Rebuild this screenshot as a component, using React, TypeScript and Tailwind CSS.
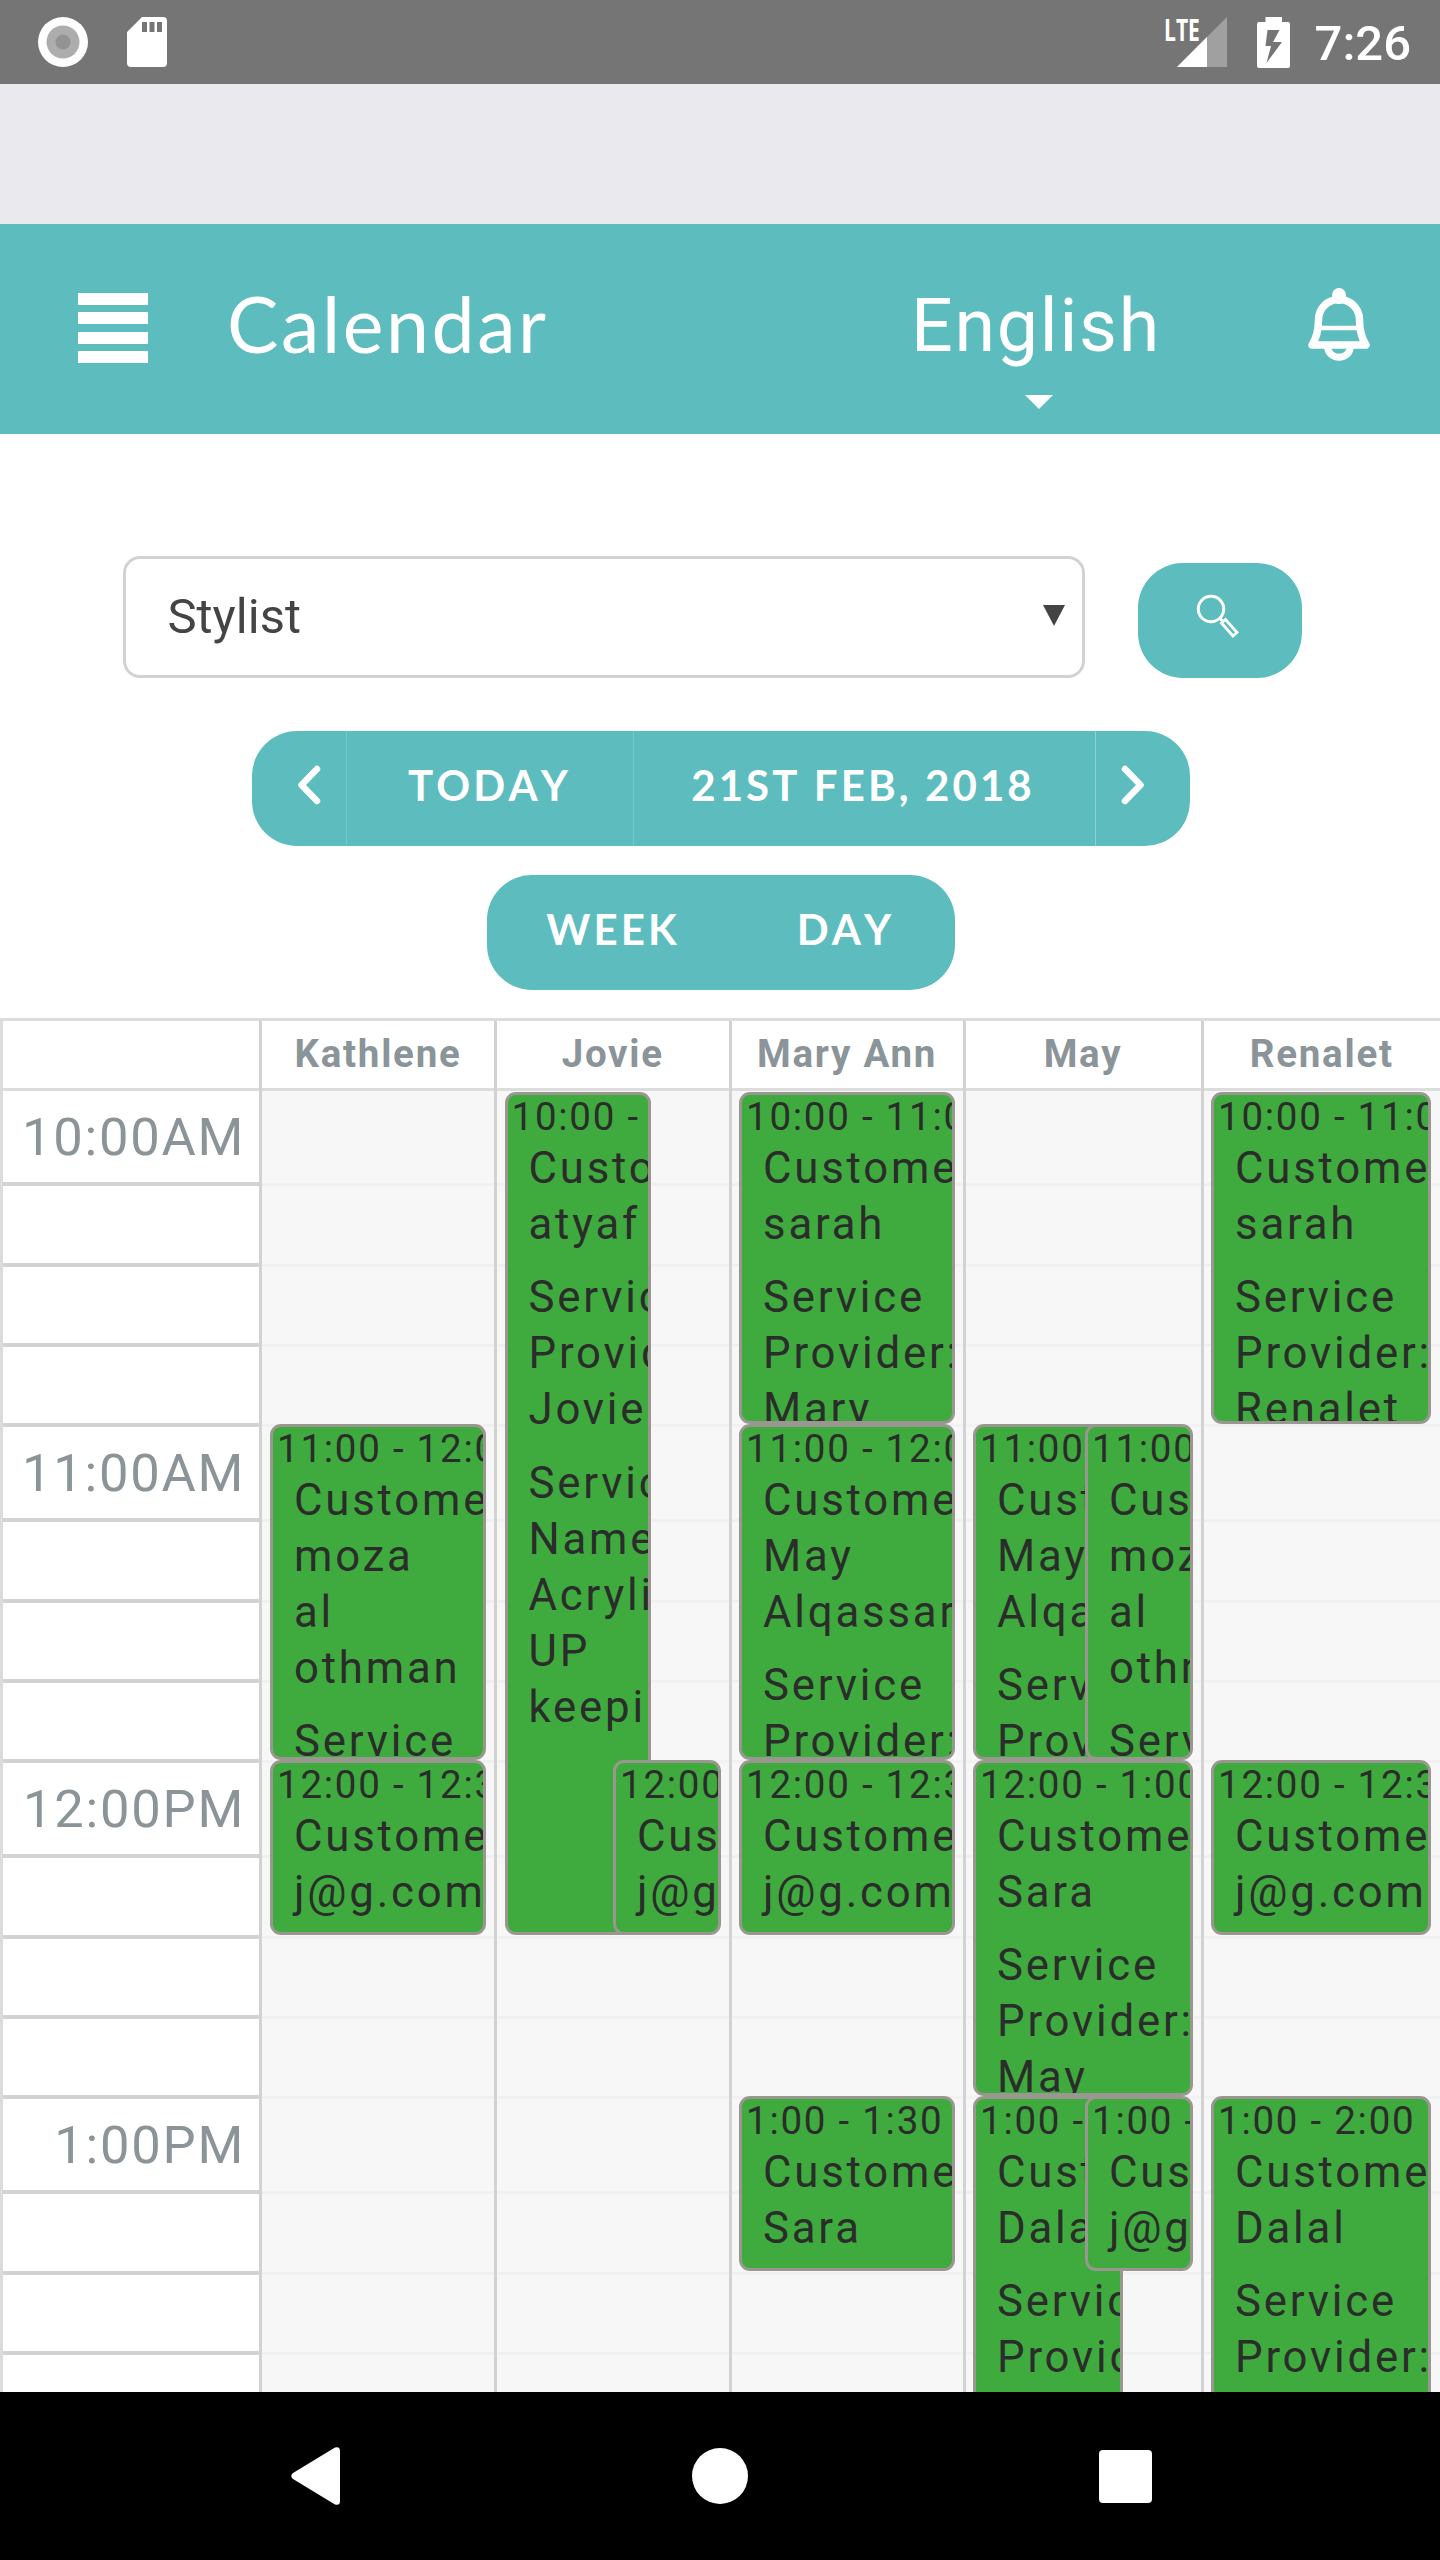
interface Booking {
  time: string;
  top: number;
  left: number;
  width: number;
  height: number;
  paragraphs: string[][];
}

interface Stylist {
  name: string;
  column: string;
  bookings: Booking[];
}

const HOURS = ["10:00AM", "11:00AM", "12:00PM", "1:00PM"];

const stylists: Stylist[] = [
  {
    name: "Kathlene",
    column: "w-[235px]",
    bookings: [
      {
        time: "11:00 - 12:00",
        top: 333,
        left: 8,
        width: 216,
        height: 336,
        paragraphs: [["Customer:", "moza", "al", "othman"], ["Service"]],
      },
      {
        time: "12:00 - 12:30",
        top: 669,
        left: 8,
        width: 216,
        height: 175,
        paragraphs: [["Customer:", "j@g.com"]],
      },
    ],
  },
  {
    name: "Jovie",
    column: "w-[234.5px]",
    bookings: [
      {
        time: "10:00 -",
        top: 1,
        left: 7.5,
        width: 146.5,
        height: 843,
        paragraphs: [
          ["Customer:", "atyaf"],
          ["Service", "Provider:", "Jovie"],
          ["Service", "Name:", "Acrylic", "UP", "keepi"],
        ],
      },
      {
        time: "12:00",
        top: 669,
        left: 116,
        width: 108,
        height: 175,
        paragraphs: [["Customer:", "j@g.com"]],
      },
    ],
  },
  {
    name: "Mary Ann",
    column: "w-[234px]",
    bookings: [
      {
        time: "10:00 - 11:00",
        top: 1,
        left: 7.5,
        width: 216,
        height: 332,
        paragraphs: [
          ["Customer:", "sarah"],
          ["Service", "Provider:", "Mary"],
        ],
      },
      {
        time: "11:00 - 12:00",
        top: 333,
        left: 7.5,
        width: 216,
        height: 336,
        paragraphs: [
          ["Customer:", "May", "Alqassar"],
          ["Service", "Provider:"],
        ],
      },
      {
        time: "12:00 - 12:30",
        top: 669,
        left: 7.5,
        width: 216,
        height: 175,
        paragraphs: [["Customer:", "j@g.com"]],
      },
      {
        time: "1:00 - 1:30",
        top: 1005,
        left: 7.5,
        width: 216,
        height: 175,
        paragraphs: [["Customer:", "Sara"]],
      },
    ],
  },
  {
    name: "May",
    column: "w-[238px]",
    bookings: [
      {
        time: "11:00 -",
        top: 333,
        left: 7.5,
        width: 150,
        height: 336,
        paragraphs: [
          ["Customer:", "May", "Alqassar"],
          ["Service", "Provider:"],
        ],
      },
      {
        time: "11:00 -",
        top: 333,
        left: 119.5,
        width: 108,
        height: 336,
        paragraphs: [["Customer:", "moza", "al", "othman"], ["Service"]],
      },
      {
        time: "12:00 - 1:00",
        top: 669,
        left: 7.5,
        width: 220,
        height: 336,
        paragraphs: [
          ["Customer:", "Sara"],
          ["Service", "Provider:", "May"],
        ],
      },
      {
        time: "1:00 - 2:00",
        top: 1005,
        left: 7.5,
        width: 150,
        height: 336,
        paragraphs: [
          ["Customer:", "Dalal"],
          ["Service", "Provider:"],
        ],
      },
      {
        time: "1:00 - 1:30",
        top: 1005,
        left: 119.5,
        width: 108,
        height: 175,
        paragraphs: [["Customer:", "j@g.com"]],
      },
    ],
  },
  {
    name: "Renalet",
    column: "w-[239.5px]",
    bookings: [
      {
        time: "10:00 - 11:00",
        top: 1,
        left: 7.5,
        width: 220,
        height: 332,
        paragraphs: [
          ["Customer:", "sarah"],
          ["Service", "Provider:", "Renalet"],
        ],
      },
      {
        time: "12:00 - 12:30",
        top: 669,
        left: 7.5,
        width: 220,
        height: 175,
        paragraphs: [["Customer:", "j@g.com"]],
      },
      {
        time: "1:00 - 2:00",
        top: 1005,
        left: 7.5,
        width: 220,
        height: 336,
        paragraphs: [
          ["Customer:", "Dalal"],
          ["Service", "Provider:"],
        ],
      },
    ],
  },
];

function StatusBar() {
  return (
    <div className="flex h-[84px] shrink-0 items-center bg-[#757575] text-white">
      <svg className="ml-[38px] size-[50px]" viewBox="0 0 50 50">
        <circle cx="25" cy="25" r="25" fill="#fff" />
        <circle cx="25" cy="25" r="16.5" fill="#adadad" />
        <circle cx="25" cy="25" r="7.5" fill="#939393" />
      </svg>
      <svg className="ml-[39px] h-[50px] w-[40px]" viewBox="0 0 40 50">
        <path
          fill="#fff"
          fillRule="evenodd"
          d="M15 0H36a4 4 0 0 1 4 4V46a4 4 0 0 1-4 4H4a4 4 0 0 1-4-4V15ZM15 5V15H20V5ZM22.500 5V15H27.500V5ZM30 5V15H35V5Z"
        />
      </svg>
      <div className="relative ml-auto h-[50px] w-[62px]">
        <svg className="absolute right-0 top-0 size-[50px]" viewBox="0 0 50 50">
          <path d="M50 0V50H0Z" fill="#a0a0a0" />
          <path d="M30 20V50H0Z" fill="#fff" />
        </svg>
        <span className="absolute -left-px top-0 origin-left scale-x-[0.68] font-[Open_Sans,sans-serif] text-[31px] font-bold leading-[25px]">
          LTE
        </span>
      </div>
      <svg className="ml-[30px] h-[51px] w-[33px]" viewBox="0 0 33 51">
        <path
          fill="#fff"
          fillRule="evenodd"
          d="M8.500 0H25V5H31a2 2 0 0 1 2 2V49a2 2 0 0 1-2 2H2a2 2 0 0 1-2-2V7a2 2 0 0 1 2-2H8.500ZM10.500 13L8.500 29H14L9.500 46L25 25H16L22.500 13Z"
        />
      </svg>
      <span className="ml-[25px] mr-[29px] mt-[4px] text-[49px] font-medium leading-[58px]">
        7:26
      </span>
    </div>
  );
}

function Header() {
  return (
    <header className="flex h-[210px] shrink-0 items-start bg-[#5dbcbe] text-white">
      <div className="ml-[78px] mt-[69px] flex w-[70px] flex-col gap-[7.7px]">
        <div className="h-[11.8px] bg-white" />
        <div className="h-[11.8px] bg-white" />
        <div className="h-[11.8px] bg-white" />
        <div className="h-[11.8px] bg-white" />
      </div>
      <h1 className="ml-[79px] mt-[51px] font-[Lato,sans-serif] text-[77px] leading-[96px] tracking-[2.6px]">
        Calendar
      </h1>
      <div className="ml-auto mr-[147px] mt-[59px] flex flex-col items-center">
        <span className="text-[73.5px] leading-[86px] tracking-[1.75px]">
          English
        </span>
        <svg className="ml-[7px] mt-[26px] h-[14px] w-[28px]" viewBox="0 0 28 14">
          <path d="M0 0H28L14 14Z" fill="#fff" />
        </svg>
      </div>
      <svg
        className="mr-[70px] mt-[64px] h-[76px] w-[62px]"
        viewBox="0 0 62 76"
        fill="none"
        stroke="#fff"
      >
        <path
          strokeWidth="7.500"
          strokeLinejoin="round"
          d="M4 57C9 49 10.500 42 10.500 32C10.500 20 20 11.500 31 11.500C42 11.500 51.500 20 51.500 32C51.500 42 53 49 58 57Z"
        />
        <path strokeWidth="4.500" d="M12 40H50" />
        <path strokeWidth="14" strokeLinecap="round" d="M31 7V9" />
        <path strokeWidth="7" d="M19.500 58C19.500 73 42.500 73 42.500 58" />
      </svg>
    </header>
  );
}

function Filters() {
  return (
    <div className="flex items-start pl-[123px] pt-[122px]">
      <div className="flex h-[122px] w-[962px] items-center justify-between rounded-[17px] border-[3px] border-[#d2d2d2] bg-white pl-[41.5px] pr-[17px] text-[#444]">
        <span className="text-[49px] leading-[58px]">Stylist</span>
        <svg className="mb-1 h-[21px] w-[22px]" viewBox="0 0 22 21">
          <path d="M0 0H22L11 21Z" fill="#444" />
        </svg>
      </div>
      <button className="ml-[53px] mt-[7px] flex h-[115px] w-[164px] justify-center rounded-[45px] bg-[#5dbcbe]">
        <svg
          className="mr-[4px] mt-[31px] size-[44px]"
          viewBox="0 0 44 44"
          fill="none"
          stroke="#fff"
        >
          <circle cx="15" cy="15" r="12.700" strokeWidth="3" />
          <path strokeWidth="3" d="M23.500 24L26.500 27" />
          <path
            strokeWidth="2.700"
            d="M29.500 25.500L41 38.500L37 42L25.500 29Z"
          />
        </svg>
      </button>
    </div>
  );
}

function Chevron({ flipped = false }: { flipped?: boolean }) {
  return (
    <svg
      className={flipped ? "h-[40px] w-[24px] rotate-180" : "h-[40px] w-[24px]"}
      viewBox="0 0 24 40"
    >
      <path
        d="M20 4L4.500 20L20 36"
        fill="none"
        stroke="#fff"
        strokeWidth="6.500"
        strokeLinecap="round"
        strokeLinejoin="round"
      />
    </svg>
  );
}

function Toolbar() {
  return (
    <div className="flex flex-col font-[Lato,sans-serif] text-[42px] font-bold leading-[50px] tracking-[3.1px] text-white [font-kerning:none]">
      <div className="ml-[252px] mt-[53px] flex h-[115px] w-[938px] items-stretch overflow-hidden rounded-[45px] bg-[#5dbcbe]">
        <button className="flex w-[94px] items-center pb-[8px] pl-[45px]">
          <Chevron />
        </button>
        <button className="w-[287px] border-l border-[#77c6c8] pb-[7px] pr-[1px]">
          TODAY
        </button>
        <button className="w-[462px] border-l border-[#77c6c8] pb-[7px] pr-[3px]">
          21ST FEB, 2018
        </button>
        <button className="flex flex-1 items-center border-l border-[#8ed0d1] pb-[8px] pl-[25px]">
          <Chevron flipped />
        </button>
      </div>
      <div className="ml-[487px] mt-[29px] flex h-[115px] w-[468px] rounded-[45px] bg-[#5dbcbe] pb-[7px]">
        <button className="w-[251px] pl-[1px]">WEEK</button>
        <button className="w-[217px] pr-[2px]">DAY</button>
      </div>
    </div>
  );
}

function BookingCard({ booking }: { booking: Booking }) {
  const { time, top, left, width, height, paragraphs } = booking;
  return (
    <div
      className="absolute overflow-hidden whitespace-nowrap rounded-[11px] border-[3px] border-[#9a9790] bg-[#3fab3f] text-[#2b2d2a]"
      style={{ top, left, width, height }}
    >
      <div className="pl-[4px] pt-[1px] text-[38.5px] leading-[42px] tracking-[1.75px]">
        {time}
      </div>
      <div className="mt-[1.5px] flex flex-col gap-[17.5px] pl-[21px] text-[43.75px] leading-[56px] tracking-[2.8px]">
        {paragraphs.map((lines, i) => (
          <div key={i}>
            {lines.map((line) => (
              <p key={line}>{line}</p>
            ))}
          </div>
        ))}
      </div>
    </div>
  );
}

function Schedule() {
  return (
    <div className="mt-[28px] flex min-h-0 flex-1 overflow-hidden border-t-[3px] border-[#dcdcdc]">
      <div className="w-[259px] shrink-0 border-l-[3px] border-[#dcdcdc]">
        <div className="h-[70px] border-b-[3px] border-[#dcdcdc]" />
        {HOURS.map((hour) => (
          <div key={hour}>
            <div className="h-[95px] border-b-4 border-[#d3d3d3] pr-[14px] pt-[15px] text-right text-[52.5px] leading-[62px] tracking-[1.75px] text-[#8a9499]">
              {hour}
            </div>
            <div className="h-[80.5px] border-b-4 border-[#d3d3d3]" />
            <div className="h-[80.5px] border-b-4 border-[#d3d3d3]" />
            <div className="h-[80px] border-b-4 border-[#d3d3d3]" />
          </div>
        ))}
      </div>
      {stylists.map((stylist) => (
        <div
          key={stylist.name}
          className={`${stylist.column} shrink-0 border-l-[3px] border-[#d2d2d2]`}
        >
          <div className="h-[70px] border-b-[3px] border-[#dcdcdc] pt-[10px] text-center text-[38.5px] font-bold leading-[45px] tracking-[1.75px] text-[#8a9499]">
            {stylist.name}
          </div>
          <div className="relative bg-[#f7f7f7]">
            {HOURS.map((hour) => (
              <div key={hour}>
                <div className="h-[95px] border-b-[3px] border-[#f1f1f1]" />
                <div className="h-[80.5px] border-b-[3px] border-[#f1f1f1]" />
                <div className="h-[80.5px] border-b-[3px] border-[#f1f1f1]" />
                <div className="h-[80px] border-b-[3px] border-[#f1f1f1]" />
              </div>
            ))}
            {stylist.bookings.map((booking) => (
              <BookingCard
                key={`${booking.top}-${booking.left}`}
                booking={booking}
              />
            ))}
          </div>
        </div>
      ))}
      <div className="flex-1 bg-[#d2d2d2]" />
    </div>
  );
}

function NavigationBar() {
  return (
    <nav className="flex h-[168px] shrink-0 items-center bg-black">
      <svg className="ml-[291px] h-[58px] w-[49px]" viewBox="0 0 49 58">
        <path
          d="M44 0.500Q49 -1 49 4V54Q49 59 44 57.500L2 32Q-1.500 29 2 26Z"
          fill="#fff"
        />
      </svg>
      <div className="ml-[351.5px] size-[56px] rounded-full bg-white" />
      <div className="ml-[351px] size-[53px] rounded-[4px] bg-white" />
    </nav>
  );
}

export default function App() {
  return (
    <div className="flex h-[2560px] w-[1440px] flex-col overflow-hidden bg-white font-[Roboto,sans-serif]">
      <StatusBar />
      <div className="h-[140px] shrink-0 bg-[#e9e9ee]" />
      <Header />
      <Filters />
      <Toolbar />
      <Schedule />
      <NavigationBar />
    </div>
  );
}
